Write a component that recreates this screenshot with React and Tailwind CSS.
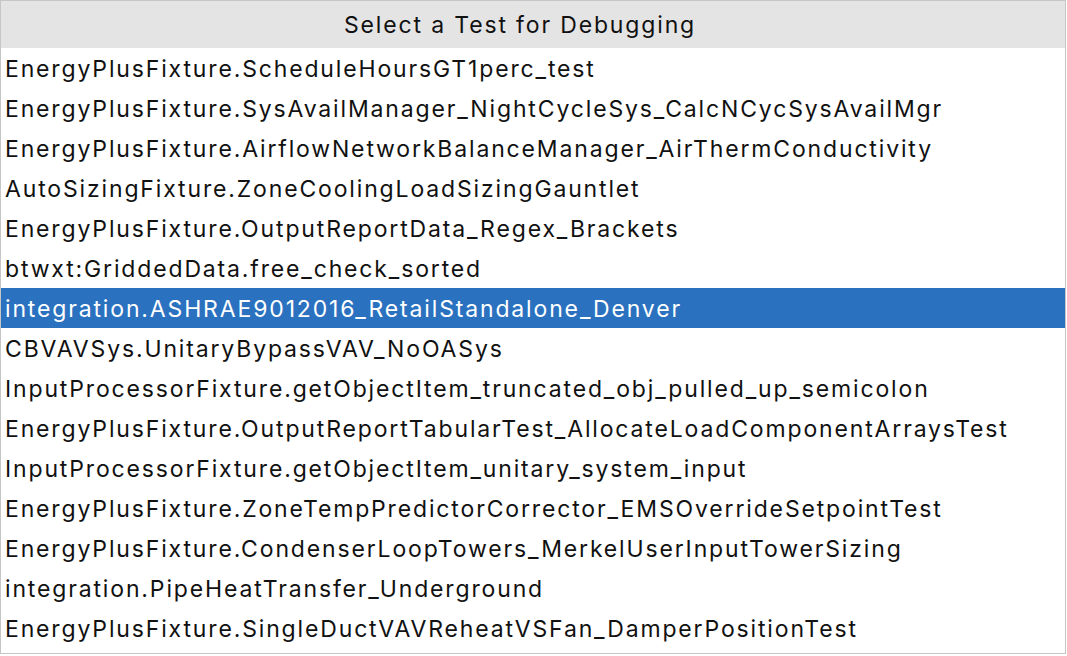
import React from 'react';

const TESTS = [
  'EnergyPlusFixture.ScheduleHoursGT1perc_test',
  'EnergyPlusFixture.SysAvailManager_NightCycleSys_CalcNCycSysAvailMgr',
  'EnergyPlusFixture.AirflowNetworkBalanceManager_AirThermConductivity',
  'AutoSizingFixture.ZoneCoolingLoadSizingGauntlet',
  'EnergyPlusFixture.OutputReportData_Regex_Brackets',
  'btwxt:GriddedData.free_check_sorted',
  'integration.ASHRAE9012016_RetailStandalone_Denver',
  'CBVAVSys.UnitaryBypassVAV_NoOASys',
  'InputProcessorFixture.getObjectItem_truncated_obj_pulled_up_semicolon',
  'EnergyPlusFixture.OutputReportTabularTest_AllocateLoadComponentArraysTest',
  'InputProcessorFixture.getObjectItem_unitary_system_input',
  'EnergyPlusFixture.ZoneTempPredictorCorrector_EMSOverrideSetpointTest',
  'EnergyPlusFixture.CondenserLoopTowers_MerkelUserInputTowerSizing',
  'integration.PipeHeatTransfer_Underground',
  'EnergyPlusFixture.SingleDuctVAVReheatVSFan_DamperPositionTest',
];

export default function App() {
  const selected = 6;
  return (
    <div className="w-[1067px] h-[656px] bg-white" style={{ fontFamily: 'Inter, "Liberation Sans", sans-serif' }}>
      <div className="w-[1066px] h-[654px] border border-[#c6c6c6] flex flex-col">
        <div className="h-[47px] bg-[#e4e4e4] flex items-center justify-center pr-[26px] pt-[1px] text-[23px] tracking-[1.85px] text-[#111]">
          Select a Test for Debugging
        </div>
        <div className="flex flex-col">
          {TESTS.map((t, i) => (
            <div
              key={t}
              className={`h-[40px] flex items-center pl-[4px] pt-[2px] text-[23px] tracking-[1.85px] leading-none whitespace-nowrap ${
                i === selected ? 'bg-[#2a71c0] text-white' : 'text-[#111]'
              }`}
            >
              {t}
            </div>
          ))}
        </div>
      </div>
    </div>
  );
}
